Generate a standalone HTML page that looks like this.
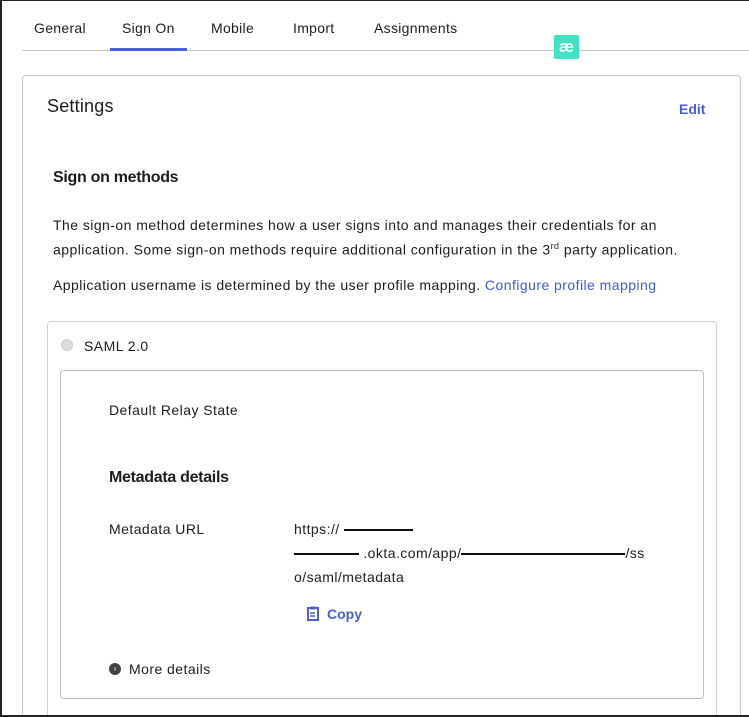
<!DOCTYPE html>
<html style="overflow:hidden;width:749px;height:717px"><head><style>
*{margin:0;padding:0;box-sizing:border-box}
body{width:749px;height:717px;overflow:hidden;background:#fff;font-family:"Liberation Sans",sans-serif;color:#1d1d21;position:relative}
.a{position:absolute;white-space:nowrap}
.frame{position:absolute;left:0;top:0;width:749px;height:717px;border-left:2px solid #222;border-top:1px solid #222;border-bottom:2px solid #222;z-index:5}
.t{font-size:14px;top:20px;color:#1d1d21;letter-spacing:0.3px}
.p{font-size:14px;color:#1d1d21;letter-spacing:0.45px}
.line{display:inline-block;height:2px;background:#111;vertical-align:middle}
</style></head><body>
<div class="frame"></div>
<div class="a t" style="left:34px">General</div>
<div class="a t" style="left:122px">Sign On</div>
<div class="a t" style="left:211px">Mobile</div>
<div class="a t" style="left:293px">Import</div>
<div class="a t" style="left:374px">Assignments</div>
<div class="a" style="left:22px;top:50px;width:727px;height:1px;background:#c9c9c9"></div>
<div class="a" style="left:110px;top:48px;width:77px;height:3px;background:#4a5fdf"></div>
<div class="a" style="left:554px;top:35px;width:25px;height:24px;background:#3fe3c2;border-radius:2px;color:#fff;font-size:17px;font-weight:bold;text-align:center;line-height:23px">æ</div>
<div class="a" style="left:22px;top:75px;width:719px;height:660px;border:1px solid #c6c6c6;border-radius:4px"></div>
<div class="a" style="left:47px;top:96px;font-size:18px;letter-spacing:0.2px">Settings</div>
<div class="a" style="left:679px;top:101px;font-size:14px;color:#4a5fd0;font-weight:bold">Edit</div>
<div class="a" style="left:53px;top:169px;font-size:16px;font-weight:bold;color:#1d1d21;letter-spacing:-0.3px">Sign on methods</div>
<div class="a p" style="left:53px;top:217px">The sign-on method determines how a user signs into and manages their credentials for an</div>
<div class="a p" style="left:53px;top:241px">application. Some sign-on methods require additional configuration in the 3<sup style="font-size:9px">rd</sup> party application.</div>
<div class="a p" style="left:53px;top:277px">Application username is determined by the user profile mapping. <span style="color:#3f5ed0">Configure profile mapping</span></div>
<div class="a" style="left:47px;top:321px;width:670px;height:400px;border:1px solid #d0d0d0;border-radius:4px"></div>
<div class="a" style="left:61px;top:339px;width:12px;height:12px;border-radius:50%;background:#ddd;border:1px solid #ccc"></div>
<div class="a p" style="left:84px;top:338px">SAML 2.0</div>
<div class="a" style="left:60px;top:370px;width:644px;height:329px;border:1px solid #bdbdbd;border-radius:4px"></div>
<div class="a p" style="left:109px;top:402px">Default Relay State</div>
<div class="a" style="left:109px;top:469px;font-size:16px;font-weight:bold;letter-spacing:-0.3px">Metadata details</div>
<div class="a p" style="left:109px;top:521px">Metadata URL</div>
<div class="a p" style="left:294px;top:521px">https:// <span class="line" style="width:69px"></span></div>
<div class="a p" style="left:294px;top:545px"><span class="line" style="width:65px"></span> .okta.com/app/<span class="line" style="width:164px"></span>/ss</div>
<div class="a p" style="left:294px;top:569px">o/saml/metadata</div>
<svg class="a" style="left:307px;top:606px" width="12" height="15" viewBox="0 0 12 15"><rect x="1" y="2" width="10" height="12" fill="none" stroke="#4a5fd0" stroke-width="2"/><rect x="3.5" y="0.5" width="5" height="3" fill="#4a5fd0"/><path d="M3 7h5M3 10h5" stroke="#4a5fd0" stroke-width="1.5"/></svg>
<div class="a" style="left:327px;top:606px;font-size:14px;font-weight:bold;color:#4a5fd0">Copy</div>
<div class="a" style="left:109px;top:663px;width:12px;height:12px;border-radius:50%;background:#444;color:#fff;font-size:8px;text-align:center;line-height:12px">›</div>
<div class="a p" style="left:129px;top:661px">More details</div>
</body></html>
